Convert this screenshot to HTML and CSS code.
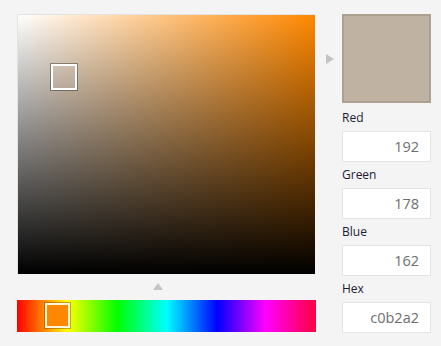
FILE: index.html
```html
<!DOCTYPE html>
<html>
<head>
<meta charset="utf-8">
<link rel="stylesheet" href="styles.css">
</head>
<body>
<div class="picker">
  <div class="left">
    <div class="sv">
      <div class="sv-white"></div>
      <div class="sv-black"></div>
      <div class="sv-thumb"></div>
    </div>
    <div class="mark-row"><span class="tri-up"></span></div>
    <div class="hue">
      <div class="hue-thumb"></div>
    </div>
  </div>
  <div class="mid"><span class="tri-right"></span></div>
  <div class="right">
    <div class="swatch"></div>
    <div class="field first">
      <div class="label">Red</div>
      <div class="input">192</div>
    </div>
    <div class="field">
      <div class="label">Green</div>
      <div class="input">178</div>
    </div>
    <div class="field">
      <div class="label">Blue</div>
      <div class="input">162</div>
    </div>
    <div class="field">
      <div class="label">Hex</div>
      <div class="input">c0b2a2</div>
    </div>
  </div>
</div>
</body>
</html>
```

FILE: styles.css
```css
html, body {
  margin: 0;
  padding: 0;
  background: #f4f4f4;
  font-family: "Open Sans", "Noto Sans", "Liberation Sans", sans-serif;
}
.picker {
  display: flex;
  padding: 14px 0 0 17px;
}
.left {
  width: 299px;
  display: flex;
  flex-direction: column;
}
.sv {
  position: relative;
  width: 298px;
  height: 260px;
  box-sizing: border-box;
  background: #ff8800;
  border-top: 1px solid #e2e2e2;
  border-left: 1px solid #e2e2e2;
  overflow: hidden;
}
.sv-white {
  position: absolute;
  inset: 0;
  background: linear-gradient(to right, #ffffff, rgba(255,255,255,0));
}
.sv-black {
  position: absolute;
  inset: 0;
  background: linear-gradient(to top, #000000, rgba(0,0,0,0));
}
.sv-thumb {
  position: absolute;
  left: 33px;
  top: 49px;
  width: 22px;
  height: 22px;
  border: 2px solid #ffffff;
  box-shadow: 0 0 0 1px rgba(0,0,0,0.35);
}
.mark-row {
  height: 26px;
  display: flex;
  align-items: flex-start;
}
.tri-up {
  margin: 9px 0 0 136px;
  width: 0;
  height: 0;
  border-left: 5px solid transparent;
  border-right: 5px solid transparent;
  border-bottom: 7px solid #c4c4c4;
}
.hue {
  position: relative;
  width: 299px;
  height: 32px;
  background: linear-gradient(to right, #ff0000 0%, #ffff00 17%, #00ff00 33.5%, #00ffff 50%, #0000ff 67%, #ff00ff 83%, #ff0040 100%);
}
.hue-thumb {
  position: absolute;
  left: 28px;
  top: 3px;
  width: 21px;
  height: 21px;
  background: #ff8800;
  border: 2px solid #fff4dc;
  box-shadow: 0 0 0 1px rgba(120,70,0,0.45);
}
.mid {
  width: 26px;
  box-sizing: border-box;
  padding: 40px 0 0 10px;
}
.tri-right {
  display: block;
  width: 0;
  height: 0;
  border-top: 5px solid transparent;
  border-bottom: 5px solid transparent;
  border-left: 8px solid #c4c4c4;
}
.right {
  width: 89px;
  display: flex;
  flex-direction: column;
}
.swatch {
  width: 89px;
  height: 89px;
  box-sizing: border-box;
  background: #c0b2a2;
  border: 2px solid #aca091;
}
.field.first {
  margin-top: 2px;
}
.label {
  height: 26px;
  box-sizing: border-box;
  display: flex;
  align-items: flex-end;
  padding-bottom: 5px;
  font-size: 12px;
  line-height: 16px;
  color: #1c1c38;
}
.input {
  height: 31px;
  box-sizing: border-box;
  background: #ffffff;
  border: 1px solid #e4e4e4;
  padding: 0 11px 0 0;
  text-align: right;
  font-size: 14.5px;
  line-height: 29px;
  color: #6e6e6e;
}
```
